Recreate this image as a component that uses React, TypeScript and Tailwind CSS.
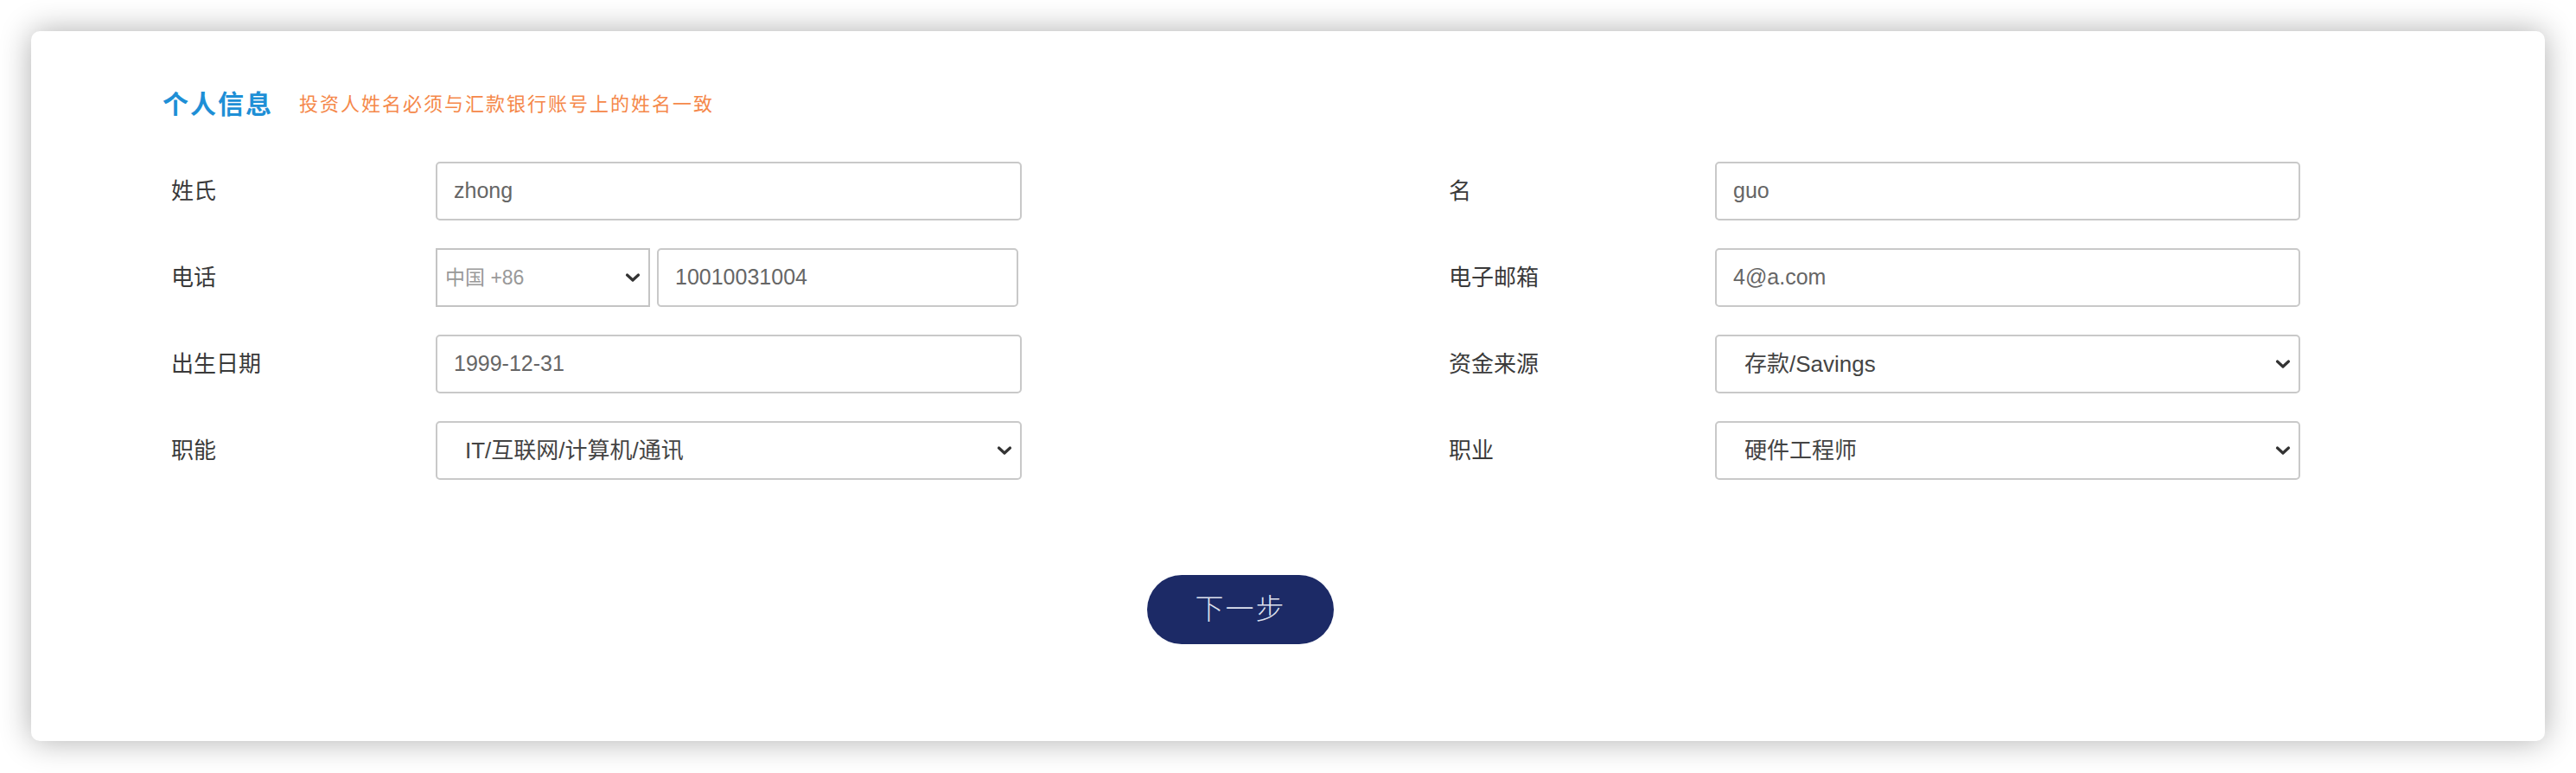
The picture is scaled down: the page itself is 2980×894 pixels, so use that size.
const font = { fontFamily: '"Liberation Sans", "Noto Sans CJK SC", sans-serif' };

const Chevron = () => (
    <svg width="18" height="11" viewBox="0 0 18 11" className="pointer-events-none absolute right-[9px] top-1/2 -translate-y-1/2">
        <path d="M2.5 2.5 L9 8.5 L15.5 2.5" fill="none" stroke="#333" strokeWidth="3.2" strokeLinecap="round" strokeLinejoin="round" />
    </svg>
);

const TextField = ({ value, width }: { value: string; width: string }) => (
    <div
        className={`
            ${width}
            h-[68px]
            flex
            items-center
            rounded-[5px]
            border-2
            border-[#c9c9c9]
            px-[19px]
            text-[25px]
            text-[#666]
        `}
    >
        {value}
    </div>
);

const SelectField = ({ value, width }: { value: string; width: string }) => (
    <div
        className={`
            relative
            ${width}
            h-[68px]
            flex
            items-center
            rounded-[5px]
            border-2
            border-[#c9c9c9]
            pl-[32px]
            text-[26px]
            text-[#444]
        `}
    >
        {value}
        <Chevron />
    </div>
);

const Row = ({ label, labelWidth, children }: { label: string; labelWidth: string; children: React.ReactNode }) => (
    <div className="flex items-center">
        <div className={`${labelWidth} text-[26px] text-[#3a3a3a]`}>{label}</div>
        {children}
    </div>
);

const App = () => {
    return (
        <div className="min-h-[894px] bg-white pt-[36px] pl-[36px]" style={font}>
            <div className="w-[2908px] h-[821px] rounded-[10px] bg-white shadow-[0_0_36px_rgba(0,0,0,0.32)] pt-[64px]">
                <div className="flex items-center h-[40px] pl-[152px] gap-[30px]">
                    <div className="text-[30px] font-bold tracking-[2px] text-[#1e8fd6]">个人信息</div>
                    <div className="text-[22px] tracking-[2px] text-[#f5884a]">投资人姓名必须与汇款银行账号上的姓名一致</div>
                </div>

                <div className="ml-[162px] w-[2474px] mt-[47px]">
                    <div className="grid grid-cols-[984px_985px] gap-x-[494px] gap-y-[32px]">
                        <Row label="姓氏" labelWidth="w-[306px]">
                            <TextField value="zhong" width="w-[678px]" />
                        </Row>
                        <Row label="名" labelWidth="w-[308px]">
                            <TextField value="guo" width="w-[677px]" />
                        </Row>

                        <Row label="电话" labelWidth="w-[306px]">
                            <div className="flex gap-[8px]">
                                <div className="relative w-[248px] h-[68px] flex items-center border-2 border-[#c4c4c4] pl-[9px] text-[23px] text-[#999]">
                                    中国 +86
                                    <Chevron />
                                </div>
                                <TextField value="10010031004" width="w-[418px]" />
                            </div>
                        </Row>
                        <Row label="电子邮箱" labelWidth="w-[308px]">
                            <TextField value="4@a.com" width="w-[677px]" />
                        </Row>

                        <Row label="出生日期" labelWidth="w-[306px]">
                            <TextField value="1999-12-31" width="w-[678px]" />
                        </Row>
                        <Row label="资金来源" labelWidth="w-[308px]">
                            <SelectField value="存款/Savings" width="w-[677px]" />
                        </Row>

                        <Row label="职能" labelWidth="w-[306px]">
                            <SelectField value="IT/互联网/计算机/通讯" width="w-[678px]" />
                        </Row>
                        <Row label="职业" labelWidth="w-[308px]">
                            <SelectField value="硬件工程师" width="w-[677px]" />
                        </Row>
                    </div>

                    <div
                        className="
                            mx-auto
                            mt-[110px]
                            w-[216px]
                            h-[80px]
                            rounded-full
                            bg-[#1c2a66]
                            flex
                            items-center
                            justify-center
                            text-[33px]
                            font-light
                            tracking-[2px]
                            text-[#dde1ee]
                            cursor-pointer
                        "
                    >
                        下一步
                    </div>
                </div>
            </div>
        </div>
    );
};

export default App;
